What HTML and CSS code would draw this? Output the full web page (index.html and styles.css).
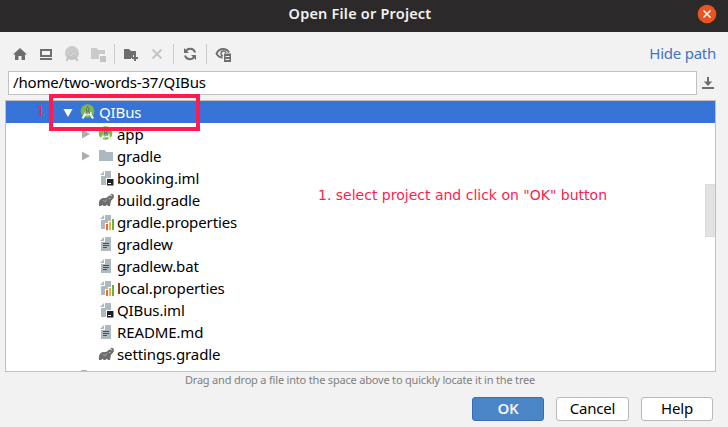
FILE: index.html
```html
<!DOCTYPE html>
<html lang="en">
<head>
<meta charset="utf-8">
<title>Open File or Project</title>
<link rel="stylesheet" href="styles.css">
</head>
<body>
<svg width="0" height="0" class="defs">
  <defs>
    <symbol id="android" viewBox="0 0 16 16">
      <circle cx="7.500" cy="7" r="6.800" fill="#7fb848"/>
      <path d="M2.500 14.500L6.300 8M13 14.500L9.200 8" stroke="#eef2f3" stroke-width="2.200" fill="none"/>
      <path d="M4 10.500Q8 12.500 11.500 8.500" stroke="#eef2f3" stroke-width="1.300" fill="none"/>
      <path d="M7.700 2v2.500M5.800 9.500L7.200 6M9.700 9.500L8.200 6" stroke="#5d7560" stroke-width="1.200" fill="none"/>
      <circle cx="7.700" cy="5" r="1.300" fill="#b9c6b4" stroke="#5d7560"/>
    </symbol>
    <symbol id="folder" viewBox="0 0 16 16"><path d="M1 2h5.500l2 2H15v9H1z" fill="#adb8bf"/></symbol>
    <symbol id="page" viewBox="0 0 16 16"><path d="M7 1h6v14H3V6h4zM6 1v4H2z" fill="#adb8bf"/></symbol>
    <symbol id="text" viewBox="0 0 16 16"><use href="#page"/><path d="M5 7.500h6M5 9.500h6M5 11.500h4" stroke="#4a4f53"/></symbol>
    <symbol id="iml" viewBox="0 0 16 16"><use href="#page"/><path d="M8 8h8v8H8z" fill="#fff"/><path d="M9 9h6.500v6.500H9z" fill="#202326"/><path d="M10 13.500h3" stroke="#fff"/></symbol>
    <symbol id="props" viewBox="0 0 16 16"><use href="#page"/><path d="M7 9h3V7h3V4h3v12H7z" fill="#fff"/><path d="M8 10h2v6H8z" fill="#f26522"/><path d="M11 8h2v8h-2z" fill="#f4af3d"/><path d="M14 5h2v11h-2z" fill="#62b543"/></symbol>
    <symbol id="gradle" viewBox="0 0 16 16"><path d="M1 14c-.5-5 1-8 5-8 2 0 3-.3 4-1.500C11.300 3 13.500 3.500 14 4.700c.3-.7.100-1.400-.7-1.500-.8-.1-.8-1.200 0-1.400 2-.4 3.300 2 2.300 4-.7 1.400-2.100 2-2.600 3.200L12 14H9.800c0-1.500-2-1.500-2.200 0H5.500c-.2-1.500-2-1.500-2.200 0z" fill="#6e6e6e"/><path d="M5 8.500q2 2.500 4-.8" stroke="#fff" stroke-width=".4" fill="none"/><circle cx="11.700" cy="6.500" r=".5" fill="#fff"/></symbol>
  </defs>
</svg>
<div class="dialog">
  <header class="titlebar"><h1>Open File or Project</h1>
    <svg class="close" viewBox="0 0 20 20"><circle cx="10" cy="10" r="9.300" fill="#e95420"/><path d="M6.500 6.500l7 7m0-7l-7 7" stroke="#fff" stroke-width="1.500"/></svg>
  </header>
  <div class="toolbar">
    <svg class="tool" viewBox="0 0 16 16"><path d="M8 2l7 6.500h-2V14H9.500v-4h-3v4H3V8.500H1z" fill="#6e6e6e"/></svg>
    <svg class="tool" viewBox="0 0 16 16"><path d="M3 4h10v6H3z" fill="none" stroke="#6e6e6e" stroke-width="2"/><path d="M2 13h12" stroke="#6e6e6e" stroke-width="2"/></svg>
    <svg class="tool" viewBox="0 0 16 16"><circle cx="8" cy="7" r="7" fill="#cacaca"/><path d="M2.500 15l4-8m7 8l-4-8M5 12q3 2 6-1" stroke="#c3c3c3" stroke-width="2" fill="none"/><path d="M4 8l3 2 2-3 3 1" stroke="#d4d4d4" fill="none"/></svg>
    <svg class="tool wide" viewBox="0 0 17 16"><path d="M1 2h5.500l2 2H15v4H9v5H1z" fill="#cacaca"/><path d="M10 10h6v6h-6z" fill="#c3c3c3"/></svg>
    <i class="sep first"></i>
    <svg class="tool" viewBox="0 0 16 16"><path d="M1 3h5l2 2h5v4h-3v3H8v1H1z" fill="#6e6e6e"/><path d="M12 9v6M9 12h6" stroke="#6e6e6e" stroke-width="2"/></svg>
    <svg class="tool" viewBox="0 0 16 16"><path d="M3.500 3.500l9 9m0-9l-9 9" stroke="#c5c5c5" stroke-width="2"/></svg>
    <i class="sep"></i>
    <svg class="tool" viewBox="0 0 16 16"><path d="M3.500 6A5 5 0 0 1 13 6.500M12.500 10A5 5 0 0 1 3 9.500" stroke="#6e6e6e" stroke-width="2" fill="none"/><path d="M2 2v5h5zM14 14V9H9z" fill="#6e6e6e"/></svg>
    <i class="sep"></i>
    <svg class="tool wide" viewBox="0 0 17 16"><path d="M7.500 11.500C4.500 11.500 2.500 9.500 1.500 7.500 3 4.500 5.500 3 8 3s5 1.500 6 3.500" stroke="#6e6e6e" stroke-width="1.800" fill="none"/><path d="M8 10a2.500 2.500 0 1 1 3-3" stroke="#6e6e6e" stroke-width="1.500" fill="none"/><path d="M9 7.500h7V16H9z" fill="#6e6e6e"/><path d="M10.500 10.500h4m-4 3h4" stroke="#f2f2f2"/></svg>
    <a class="hide"><span>Hide path</span></a>
  </div>
  <div class="pathrow"><div class="path"><span>/home/two-words-37/QIBus</span></div>
    <svg class="download" viewBox="0 0 14 14"><path d="M7 1v6" stroke="#6e6e6e" stroke-width="2"/><path d="M2.800 5.500h8.400L7 10zM1 11h12v2H1z" fill="#6e6e6e"/></svg>
  </div>
  <main class="tree">
    <div class="row root"><b class="step">1</b><svg class="arrow" viewBox="0 0 10 10"><path d="M.500 1h9L5 9z" fill="#fff"/></svg><svg class="ico"><use href="#android"/></svg><span>QIBus</span></div>
    <div class="row"><svg class="arrow" viewBox="0 0 10 10"><path d="M1 .500v9L9 5z" fill="#adadad"/></svg><svg class="ico"><use href="#android"/></svg><span>app</span></div>
    <div class="row"><svg class="arrow" viewBox="0 0 10 10"><path d="M1 .500v9L9 5z" fill="#adadad"/></svg><svg class="ico"><use href="#folder"/></svg><span>gradle</span></div>
    <div class="row leaf"><svg class="ico"><use href="#iml"/></svg><span>booking.iml</span></div>
    <div class="row leaf"><svg class="ico"><use href="#gradle"/></svg><span>build.gradle</span></div>
    <div class="row leaf"><svg class="ico"><use href="#props"/></svg><span>gradle.properties</span></div>
    <div class="row leaf"><svg class="ico"><use href="#text"/></svg><span>gradlew</span></div>
    <div class="row leaf"><svg class="ico"><use href="#text"/></svg><span>gradlew.bat</span></div>
    <div class="row leaf"><svg class="ico"><use href="#props"/></svg><span>local.properties</span></div>
    <div class="row leaf"><svg class="ico"><use href="#iml"/></svg><span>QIBus.iml</span></div>
    <div class="row leaf"><svg class="ico"><use href="#text"/></svg><span>README.md</span></div>
    <div class="row leaf"><svg class="ico"><use href="#gradle"/></svg><span>settings.gradle</span></div>
    <div class="peek"></div>
    <div class="highlight"></div>
    <p class="note">1. select project and click on "OK" button</p>
    <div class="thumb"></div>
  </main>
  <p class="hint"><span>Drag and drop a file into the space above to quickly locate it in the tree</span></p>
  <footer class="actions"><button class="primary">OK</button><button>Cancel</button><button>Help</button></footer>
</div>
</body>
</html>
```
FILE: styles.css
```css
* { box-sizing: border-box; }
body { margin: 0; overflow: hidden; background: #f2f2f2; color: #000; font: 15px/22px "Noto Sans", sans-serif; }
h1, p { margin: 0; }
.defs { position: absolute; }
.dialog { display: flex; flex-direction: column; width: 728px; height: 427px; }
.titlebar { position: relative; height: 32px; flex: none; background: #2c292a; display: flex; align-items: center; justify-content: center; padding-bottom: 6px; }
h1 { color: #f2f2f2; font-size: 14.5px; line-height: 20px; font-weight: 600; padding-right: 8px; letter-spacing: .2px; }
.close { position: absolute; right: 11px; top: 4px; width: 20px; height: 20px; }
.toolbar { height: 39px; flex: none; display: flex; align-items: center; gap: 10px; padding: 5px 12px 0; }
.tool { width: 16px; height: 16px; flex: none; }
.wide { width: 17px; }
.sep { width: 1px; height: 20px; background: #c9c9c9; margin: 0 -2px; }
.sep.first { margin-left: -3px; }
.hide { margin-left: auto; color: #4373c4; letter-spacing: -.25px; line-height: 20px; padding-bottom: 2px; }
.pathrow { height: 24px; flex: none; display: flex; align-items: center; padding: 0 13px 0 8px; gap: 4px; }
.path { height: 24px; width: 689px; flex: none; border: 1px solid #c2c2c2; background: #fff; padding-left: 4px; letter-spacing: -.17px; line-height: 21px; }
.download { width: 14px; height: 14px; flex: none; }
.tree { position: relative; height: 272px; margin: 5px 12px 0 5px; border: 1px solid #c0c0c0; background: #fff; flex: none; }
.row { height: 22px; display: flex; align-items: center; padding-left: 75px; letter-spacing: -.12px; }
.row.leaf { padding-left: 92px; }
.row.root { background: #3874d8; color: #fff; padding-left: 30px; }
.arrow { width: 10px; height: 10px; margin-right: 7px; }
.root .arrow { margin-top: 2px; }
.ico { width: 16px; height: 16px; margin-right: 3px; flex: none; }
.step { font: 14px/18px "DejaVu Sans", sans-serif; color: #f52656; width: 9px; margin-right: 18px; padding-bottom: 3px; }
.peek { width: 6px; height: 1px; margin: 5px 0 0 75px; background: #adb8bf; }
.highlight { position: absolute; left: 43px; top: -7px; width: 151px; height: 37px; border: 4px solid #ff1b4d; }
.note { position: absolute; left: 312px; top: 83px; font: 14px/22px "DejaVu Sans", sans-serif; color: #ff1b4d; white-space: nowrap; }
.thumb { position: absolute; right: 0; top: 83px; width: 10px; height: 53px; background: #e2e2e2; border: 1px solid #dadada; border-right: 0; }
.hint { text-align: center; color: #808080; font-size: 11px; line-height: 15px; height: 16px; padding-right: 8px; letter-spacing: -.19px; }
.actions { display: flex; justify-content: flex-end; gap: 12px; margin: 9px 15px 0 0; }
button { width: 73px; height: 24px; padding: 0 0 2px; border: 1px solid #b9b9b9; border-radius: 3px; background: #fff; color: #000; font: 15px/20px "Noto Sans", sans-serif; letter-spacing: -.2px; }
button:last-child { width: 72px; }
.primary { width: 72px; border-color: #3c6eb4; background: #4a86c7; color: #f2f2f2; font-weight: 600; }
```
